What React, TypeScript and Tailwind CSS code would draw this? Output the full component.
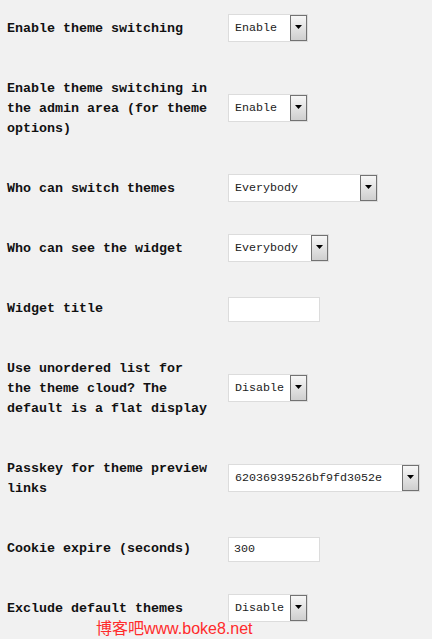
import React from "react";

type Row = {
  label: string;
  kind: "select" | "input";
  value: string;
  width: string;
};

const rows: Row[] = [
  { label: "Enable theme switching", kind: "select", value: "Enable", width: "w-[80px]" },
  { label: "Enable theme switching in the admin area (for theme options)", kind: "select", value: "Enable", width: "w-[80px]" },
  { label: "Who can switch themes", kind: "select", value: "Everybody", width: "w-[150px]" },
  { label: "Who can see the widget", kind: "select", value: "Everybody", width: "w-[101px]" },
  { label: "Widget title", kind: "input", value: "", width: "w-[92px]" },
  { label: "Use unordered list for the theme cloud? The default is a flat display", kind: "select", value: "Disable", width: "w-[80px]" },
  { label: "Passkey for theme preview links", kind: "select", value: "62036939526bf9fd3052e", width: "w-[192px]" },
  { label: "Cookie expire (seconds)", kind: "input", value: "300", width: "w-[92px]" },
  { label: "Exclude default themes", kind: "select", value: "Disable", width: "w-[80px]" },
];

function Select({ value, width }: { value: string; width: string }) {
  return (
    <div className={`${width} h-[28px] mb-[2px] flex items-center border border-[#dcdcdc] bg-white`}>
      <span className="flex-1 min-w-0 pl-[6px] text-[11.67px] leading-[16px] text-[#222] whitespace-nowrap">
        {value}
      </span>
      {/* dropdown button */}
      <div className="w-[17px] shrink-0 h-full flex items-center justify-center border border-[#727272] bg-gradient-to-b from-[#f7f7f7] to-[#cfcfcf]">
        <svg width="7" height="4" viewBox="0 0 7 4" className="-mt-[2px]">
          <polygon points="0,0 7,0 3.5,4" fill="#000" />
        </svg>
      </div>
    </div>
  );
}

function TextInput({ value, width }: { value: string; width: string }) {
  return (
    <div className={`${width} h-[25px] flex items-center border border-[#dcdcdc] bg-white pl-[5px] text-[11.67px] leading-[16px] text-[#222]`}>
      {value}
    </div>
  );
}

export default function App() {
  return (
    <div className="relative min-h-screen overflow-hidden bg-[#f1f1f1] font-['Liberation_Mono',monospace]">
      <div className="-mt-[1px] flex flex-col">
        {rows.map((r, i) => (
          <div key={i} className="flex items-center">
            <div className="w-[228px] shrink-0 pl-[7px] pr-[17px] py-5 text-[13.33px] leading-[20px] font-bold text-[#111]">
              {r.label}
            </div>
            {r.kind === "select" ? (
              <Select value={r.value} width={r.width} />
            ) : (
              <TextInput value={r.value} width={r.width} />
            )}
          </div>
        ))}
      </div>

      {/* watermark */}
      <div className="absolute left-[96px] top-[619px] text-[16px] leading-[19px] text-[#ff2b2b] font-['Liberation_Sans','Noto_Sans_CJK_SC',sans-serif]">
        博客吧www.boke8.net
      </div>
    </div>
  );
}
